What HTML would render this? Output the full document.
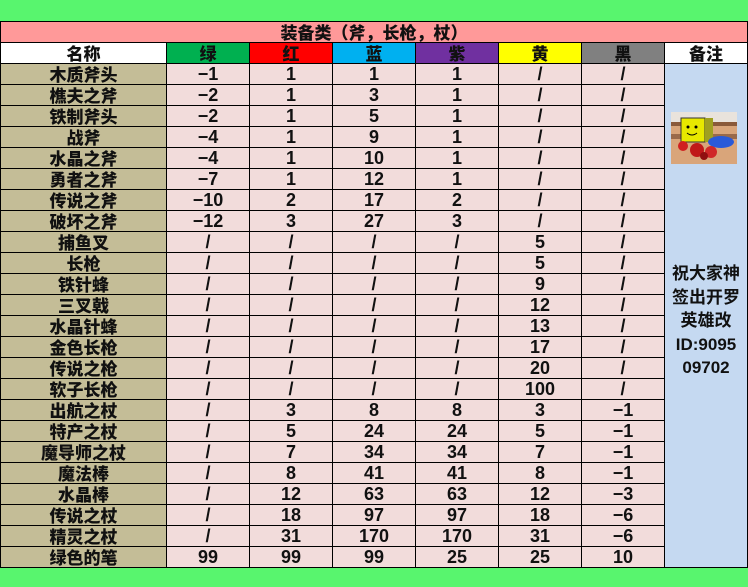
<!DOCTYPE html>
<html><head><meta charset="utf-8"><style>
body{margin:0;width:748px;height:587px;background:#58f56e;position:relative;overflow:hidden;font-family:"Liberation Sans","Noto Sans CJK SC",sans-serif;}
table{position:absolute;left:0;top:21px;border-collapse:collapse;table-layout:fixed;width:747px;}
td{border:1.5px solid #000;height:20px;padding:0;text-align:center;font-weight:bold;font-size:18px;line-height:18px;background:#f2dcdb;color:#111;overflow:hidden;white-space:nowrap;}
td.n,tr.t td,tr.h td{font-family:"Noto Sans CJK SC",sans-serif;font-size:17px;}
td.n b,tr.t td b,tr.h td b{display:block;height:20px;line-height:20px;overflow:visible;position:relative;top:0;}
td.n{background:#c4bd97;}
tr.t td{background:#ff9999;}
td.r{background:#c5d9f1;vertical-align:top;font-size:17px;line-height:23.5px;white-space:normal;position:relative;}
</style></head><body>
<table>
<colgroup><col style="width:166px"><col style="width:83px"><col style="width:83px"><col style="width:83px"><col style="width:83px"><col style="width:83px"><col style="width:83px"><col style="width:83px"></colgroup>
<tr class="t"><td colspan="8"><b>装备类（斧，长枪，杖）</b></td></tr>
<tr class="h"><td style="background:#fff"><b>名称</b></td><td style="background:#00b050"><b>绿</b></td><td style="background:#ff0000"><b>红</b></td><td style="background:#00b0f0"><b>蓝</b></td><td style="background:#7030a0"><b>紫</b></td><td style="background:#ffff00"><b>黄</b></td><td style="background:#808080"><b>黑</b></td><td style="background:#fff"><b>备注</b></td></tr>
<tr><td class="n"><b>木质斧头</b></td><td>−1</td><td>1</td><td>1</td><td>1</td><td>/</td><td>/</td>
<td class="r" rowspan="24"><div style="height:48px"></div>
<svg width="66" height="52" viewBox="0 0 66 52" style="display:block;margin-left:6px">
<rect width="66" height="52" fill="#d9a57a"/><rect y="0" width="66" height="10" fill="#e9e3dc"/><rect y="10" width="66" height="4" fill="#8a5a3a"/><rect y="22" width="66" height="5" fill="#9a6a4a"/>
<rect x="10" y="6" width="24" height="24" fill="#e8e800" stroke="#333"/><rect x="34" y="6" width="8" height="24" fill="#a0a020"/>
<circle cx="17" cy="15" r="1.5" fill="#000"/><circle cx="25" cy="15" r="1.5" fill="#000"/><path d="M16 21q5 4 10 0" stroke="#000" fill="none"/>
<ellipse cx="50" cy="30" rx="13" ry="6" fill="#2a5ad8"/><circle cx="12" cy="34" r="5" fill="#d02020"/><circle cx="26" cy="38" r="7" fill="#c01818"/><circle cx="40" cy="40" r="6" fill="#d02828"/><circle cx="33" cy="44" r="4" fill="#901010"/>
</svg>
<div style="height:98px"></div>
<div>祝大家神<br>签出开罗<br>英雄改<br>ID:9095<br>09702</div></td></tr>
<tr><td class="n"><b>樵夫之斧</b></td><td>−2</td><td>1</td><td>3</td><td>1</td><td>/</td><td>/</td></tr>
<tr><td class="n"><b>铁制斧头</b></td><td>−2</td><td>1</td><td>5</td><td>1</td><td>/</td><td>/</td></tr>
<tr><td class="n"><b>战斧</b></td><td>−4</td><td>1</td><td>9</td><td>1</td><td>/</td><td>/</td></tr>
<tr><td class="n"><b>水晶之斧</b></td><td>−4</td><td>1</td><td>10</td><td>1</td><td>/</td><td>/</td></tr>
<tr><td class="n"><b>勇者之斧</b></td><td>−7</td><td>1</td><td>12</td><td>1</td><td>/</td><td>/</td></tr>
<tr><td class="n"><b>传说之斧</b></td><td>−10</td><td>2</td><td>17</td><td>2</td><td>/</td><td>/</td></tr>
<tr><td class="n"><b>破坏之斧</b></td><td>−12</td><td>3</td><td>27</td><td>3</td><td>/</td><td>/</td></tr>
<tr><td class="n"><b>捕鱼叉</b></td><td>/</td><td>/</td><td>/</td><td>/</td><td>5</td><td>/</td></tr>
<tr><td class="n"><b>长枪</b></td><td>/</td><td>/</td><td>/</td><td>/</td><td>5</td><td>/</td></tr>
<tr><td class="n"><b>铁针蜂</b></td><td>/</td><td>/</td><td>/</td><td>/</td><td>9</td><td>/</td></tr>
<tr><td class="n"><b>三叉戟</b></td><td>/</td><td>/</td><td>/</td><td>/</td><td>12</td><td>/</td></tr>
<tr><td class="n"><b>水晶针蜂</b></td><td>/</td><td>/</td><td>/</td><td>/</td><td>13</td><td>/</td></tr>
<tr><td class="n"><b>金色长枪</b></td><td>/</td><td>/</td><td>/</td><td>/</td><td>17</td><td>/</td></tr>
<tr><td class="n"><b>传说之枪</b></td><td>/</td><td>/</td><td>/</td><td>/</td><td>20</td><td>/</td></tr>
<tr><td class="n"><b>软子长枪</b></td><td>/</td><td>/</td><td>/</td><td>/</td><td>100</td><td>/</td></tr>
<tr><td class="n"><b>出航之杖</b></td><td>/</td><td>3</td><td>8</td><td>8</td><td>3</td><td>−1</td></tr>
<tr><td class="n"><b>特产之杖</b></td><td>/</td><td>5</td><td>24</td><td>24</td><td>5</td><td>−1</td></tr>
<tr><td class="n"><b>魔导师之杖</b></td><td>/</td><td>7</td><td>34</td><td>34</td><td>7</td><td>−1</td></tr>
<tr><td class="n"><b>魔法棒</b></td><td>/</td><td>8</td><td>41</td><td>41</td><td>8</td><td>−1</td></tr>
<tr><td class="n"><b>水晶棒</b></td><td>/</td><td>12</td><td>63</td><td>63</td><td>12</td><td>−3</td></tr>
<tr><td class="n"><b>传说之杖</b></td><td>/</td><td>18</td><td>97</td><td>97</td><td>18</td><td>−6</td></tr>
<tr><td class="n"><b>精灵之杖</b></td><td>/</td><td>31</td><td>170</td><td>170</td><td>31</td><td>−6</td></tr>
<tr><td class="n"><b>绿色的笔</b></td><td>99</td><td>99</td><td>99</td><td>25</td><td>25</td><td>10</td></tr>
</table>
</body></html>
